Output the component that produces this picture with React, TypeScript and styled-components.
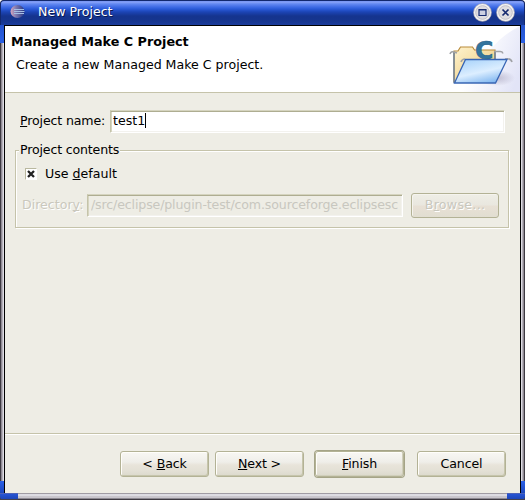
import React from "react";
import styled, { createGlobalStyle, css } from "styled-components";

const GlobalStyle = createGlobalStyle`
  body { margin: 0; overflow: hidden; }
  * { box-sizing: border-box; }
`;

const Window = styled.div`
  width: 525px;
  height: 500px;
  display: grid;
  grid-template-rows: 25px 468px 7px;
  overflow: hidden;
  background: #46424c;
  border-radius: 4px 4px 0 0;
  font: 12.6px/16px "DejaVu Sans", sans-serif;
  color: #000;
  white-space: nowrap;
`;

const TitleBar = styled.header`
  display: flex;
  align-items: center;
  padding: 0 9px 0 9px;
  border: 1px solid #12286e;
  border-width: 1px 1px 0;
  border-radius: 4px 4px 0 0;
  background: linear-gradient(#6c8cf0 0, #8aa4f8 1px, #6288f2 3px, #3f6be4 6px, #2a5ad8 8px, #1c44b4 11px, #15348e 15px, #16358e 20px, #1a3c9c 24px);
`;

const TitleText = styled.h1`
  flex: 1;
  margin: 0 0 2px 12px;
  font: 12.6px/16px "DejaVu Sans", sans-serif;
  color: #fff;
  text-shadow: 1px 1px 0 #0a1a50;
`;

const TitleButton = styled.button`
  width: 19px;
  height: 19px;
  padding: 0;
  margin: 0 0 1px 4px;
  border: 0;
  background: none;
  svg { display: block; }
`;

const Middle = styled.div`
  display: grid;
  grid-template-columns: 4px 517px 4px;
`;

const Rail = styled.div<{ $right?: boolean }>`
  background:
    linear-gradient(to bottom, #2452cc 0, #2a60e4 18px, transparent 18px, transparent 456px, #2a60e8 456px, #1d47bc 100%),
    linear-gradient(to ${(p) => (p.$right ? "left" : "right")}, #3e3a42 0 1px, #8f8a94 1px 2px, #b5b1ba 2px 3px, #dedce4 3px);
`;

const Content = styled.main`
  display: flex;
  flex-direction: column;
  border: 1px solid #000;
  border-bottom: 0;
  background: #eeede5;
`;

const Banner = styled.section`
  height: 67px;
  display: flex;
  justify-content: space-between;
  background: #fff;
  border-bottom: 1px solid #c5c3aa;
`;

const BannerText = styled.div`
  padding: 8px 0 0 6px;
`;

const Heading = styled.h2`
  margin: 0;
  font: bold 12.75px/16px "DejaVu Sans", sans-serif;
`;

const Description = styled.p`
  margin: 7px 0 0 5px;
`;

const Form = styled.section`
  height: 340px;
  padding: 17px 10px 0;
`;

const Row = styled.div`
  display: flex;
  align-items: center;
`;

const DirectoryRow = styled(Row)`
  margin-top: 11px;
`;

const Key = styled.span`
  text-decoration: underline 1px;
  text-underline-offset: 1px;
  text-decoration-skip-ink: none;
`;

const Label = styled.label<{ $width: number; $off?: boolean }>`
  width: ${(p) => p.$width}px;
  margin-bottom: 1px;
  letter-spacing: -0.15px;
  ${(p) => p.$off && css`letter-spacing: 0; color: #cac8bd; text-shadow: 1px 1px 0 #fff;`}
`;

const Field = styled.div<{ $width: number; $off?: boolean }>`
  width: ${(p) => p.$width}px;
  height: 23px;
  padding: 2px 1px 0 ${(p) => (p.$off ? 3 : 2)}px;
  display: flex;
  overflow: hidden;
  letter-spacing: ${(p) => (p.$off ? "-0.14px" : "0")};
  border: 1px solid;
  border-color: #d5d4bf #fff #fff #c5c4aa;
  box-shadow: inset 0 1px 0 #aead91, inset 1px 0 0 #d6d5c0, inset -1px -1px 0 #f3f2ee;
  background: ${(p) => (p.$off ? "#eeede5" : "#fff")};
  color: ${(p) => (p.$off ? "#c8c7bf" : "#000")};
`;

const FieldText = styled.span`
  min-width: 0;
  overflow: hidden;
`;

const Caret = styled.i`
  width: 1px;
  height: 15px;
  background: #000;
`;

const Group = styled.fieldset`
  width: 494px;
  height: 86px;
  margin: 9px 0 0;
  padding: 0 0 0 6px;
  min-width: 0;
  border: 1px solid #c5c3aa;
  box-shadow: 1px 1px 0 #fff, inset 1px 1px 0 #fff;
  legend {
    margin-left: -3px;
    padding: 0 1px;
    line-height: 16px;
    letter-spacing: -0.17px;
    background: #eeede5;
  }
`;

const CheckRow = styled(Row)`
  margin-top: 8px;
  padding-left: 3px;
  gap: 8px;
`;

const CheckBox = styled.span`
  width: 12px;
  height: 12px;
  border: 1px solid;
  border-color: #b9b89f #fff #fff #b9b89f;
  background: #fff;
  svg { display: block; }
`;

const Button = styled.button<{ $default?: boolean; $off?: boolean }>`
  width: ${(p) => (p.$off ? 88 : 89)}px;
  height: 26px;
  padding: 0 0 1px;
  border: 1px solid #b3b295;
  border-radius: 3px;
  background: linear-gradient(#f8f7f3 0, #efeee9 10px, #e8e4da 13px, #e3e0d5 19px, #dbd9cc);
  box-shadow: inset 1px 1px 0 #fffefa, inset -1px -1px 0 #c6c5ac;
  font: 12.6px/16px "DejaVu Sans", sans-serif;
  letter-spacing: -0.15px;
  color: #000;
  ${(p) => p.$off && css`
    height: 25px;
    background: linear-gradient(#efeee6 0, #e9e7df 11px, #e8e0d5 12px, #e1ded1);
    box-shadow: inset 1px 1px 0 #f5f4ee;
    letter-spacing: 0.3px;
    color: #c8c7bd;
    text-shadow: 1px 1px 0 #fff;
  `}
  ${(p) => p.$default && css`
    box-shadow: inset 1px 1px 0 #fffefa, inset -1px -1px 0 #d0cfbb, 0 0 0 1px #a5a487;
  `}
`;

const ButtonBar = styled.footer`
  flex: 1;
  display: flex;
  align-items: flex-start;
  padding: 17px 0 0 115px;
  border-top: 1px solid #c5c3aa;
  box-shadow: inset 0 1px 0 #fff;
`;

const Gap = styled.span<{ $w: number }>`
  flex: none;
  width: ${(p) => p.$w}px;
`;

const BottomRail = styled.div`
  display: grid;
  grid-template-columns: 18px 1fr 18px;
  border-radius: 0 0 4px 4px;
  overflow: hidden;
`;

const Corner = styled.div`
  margin-bottom: 1px;
  background: linear-gradient(#4c62b8 0 1px, #2654d4 1px, #1d46b8);
`;

const BottomMid = styled.div`
  background: linear-gradient(#a09ca4 0 1px, #dddce3 1px 3px, #c9c6cd 3px 5px, #8d8992 5px 6px, #3e3a42 6px);
`;

const Globe = styled.svg`
  margin-bottom: 3px;
`;

const GlobeIcon = () => (
  <Globe width="16" height="16" viewBox="0 0 16 16">
    <defs>
      <linearGradient id="globe" x1="0" x2="1">
        <stop offset="0" stopColor="#d8a8bd" />
        <stop offset=".4" stopColor="#7c78b0" />
        <stop offset="1" stopColor="#263681" />
      </linearGradient>
    </defs>
    <ellipse cx="7.5" cy="7.5" rx="7" ry="6.5" fill="url(#globe)" />
    <path d="M4 5.500h10M4 7.500h10.500M4 9.500h10" stroke="#a5bfe4" strokeWidth="1" />
  </Globe>
);

const RoundButton = ({ close }: { close?: boolean }) => (
  <svg width="19" height="19" viewBox="0 0 19 19">
    <circle cx="9.5" cy="9.5" r="9.300" fill="#b4b1b8" />
    <circle cx="9.5" cy="9.5" r="8.500" fill="#f6f5f6" />
    <circle cx="9.5" cy="9.5" r="6.8" fill="#dfdde1" stroke="#c2bfc6" />
    {close ? (
      <path d="M6.500 6.500l6 6M12.500 6.500l-6 6" stroke="#15296f" strokeWidth="1.700" />
    ) : (
      <path d="M6 6.500h7v6H6zM6 7h7" fill="#cdd0e2" stroke="#15296f" strokeWidth="1.200" />
    )}
  </svg>
);

const FolderArt = () => (
  <svg width="75" height="66" viewBox="0 0 75 66">
    <defs>
      <linearGradient id="sky" x1="0" y1="0.300" x2="1" y2=".7">
        <stop offset=".3" stopColor="#fff" />
        <stop offset="1" stopColor="#e2e4f7" />
      </linearGradient>
      <linearGradient id="manila" x1="0" y1="0" x2="1" y2="1">
        <stop offset="0" stopColor="#fff3cf" />
        <stop offset="1" stopColor="#eac674" />
      </linearGradient>
      <linearGradient id="flap" x1=".2" y1="0" x2=".7" y2="1">
        <stop offset="0" stopColor="#a9d3fa" />
        <stop offset=".55" stopColor="#dceeff" />
        <stop offset="1" stopColor="#7fb6f0" />
      </linearGradient>
      <radialGradient id="shade">
        <stop offset="0" stopColor="#a7a3bd" stopOpacity=".65" />
        <stop offset="1" stopColor="#a7a3bd" stopOpacity="0" />
      </radialGradient>
    </defs>
    <path d="M75 0V66H12C32 56 35 20 75 0Z" fill="url(#sky)" />
    <ellipse cx="52" cy="52" rx="18" ry="8" fill="url(#shade)" />
    <path d="M9 56V25h4l2.500-4h12l2 3H50v32Z" fill="url(#manila)" stroke="#b98b3a" strokeWidth="1.200" />
    <path d="M9 57V26M50 25v8" stroke="#5878a6" strokeWidth="1.200" />
    <path d="M5 28q1-3 4-2l3 1M49 25.500h6q3 0 2.500 2M16 36q1-3 4-3M60 33q6-1 7 3" fill="none" stroke="#a0a2a6" strokeWidth="1.600" />
    <path d="M20.500 33.500H62L50.500 57H9.500Z" fill="url(#flap)" stroke="#3865b4" strokeWidth="1.300" />
    <text x="30" y="32.500" fontFamily="DejaVu Sans, sans-serif" fontWeight="bold" fontSize="25" fill="#34749c" stroke="#2d668d" strokeWidth=".6">C</text>
  </svg>
);

export default function App() {
  return (
    <>
      <GlobalStyle />
      <Window>
        <TitleBar>
          <GlobeIcon />
          <TitleText>New Project</TitleText>
          <TitleButton aria-label="Maximize"><RoundButton /></TitleButton>
          <TitleButton aria-label="Close"><RoundButton close /></TitleButton>
        </TitleBar>
        <Middle>
          <Rail />
          <Content>
            <Banner>
              <BannerText>
                <Heading>Managed Make C Project</Heading>
                <Description>Create a new Managed Make C project.</Description>
              </BannerText>
              <FolderArt />
            </Banner>
            <Form>
              <Row>
                <Gap $w={5} />
                <Label $width={90}><Key>P</Key>roject name:</Label>
                <Field $width={395}>test1<Caret /></Field>
              </Row>
              <Group>
                <legend>Project contents</legend>
                <CheckRow>
                  <CheckBox>
                    <svg width="10" height="10" viewBox="0 0 10 10">
                      <path d="M2 2l6 6M8 2L2 8" stroke="#222" strokeWidth="2.300" />
                    </svg>
                  </CheckBox>
                  <span>Use <Key>d</Key>efault</span>
                </CheckRow>
                <DirectoryRow>
                  <Label $width={65} $off>Director<Key>y</Key>:</Label>
                  <Field $width={316} $off>
                    <FieldText>/src/eclipse/plugin-test/com.sourceforge.eclipsesc</FieldText>
                  </Field>
                  <Gap $w={8} />
                  <Button $off disabled>B<Key>r</Key>owse...</Button>
                </DirectoryRow>
              </Group>
            </Form>
            <ButtonBar>
              <Button>&lt; <Key>B</Key>ack</Button>
              <Gap $w={6} />
              <Button><Key>N</Key>ext &gt;</Button>
              <Gap $w={11} />
              <Button $default><Key>F</Key>inish</Button>
              <Gap $w={13} />
              <Button>Cancel</Button>
            </ButtonBar>
          </Content>
          <Rail $right />
        </Middle>
        <BottomRail>
          <Corner />
          <BottomMid />
          <Corner />
        </BottomRail>
      </Window>
    </>
  );
}
